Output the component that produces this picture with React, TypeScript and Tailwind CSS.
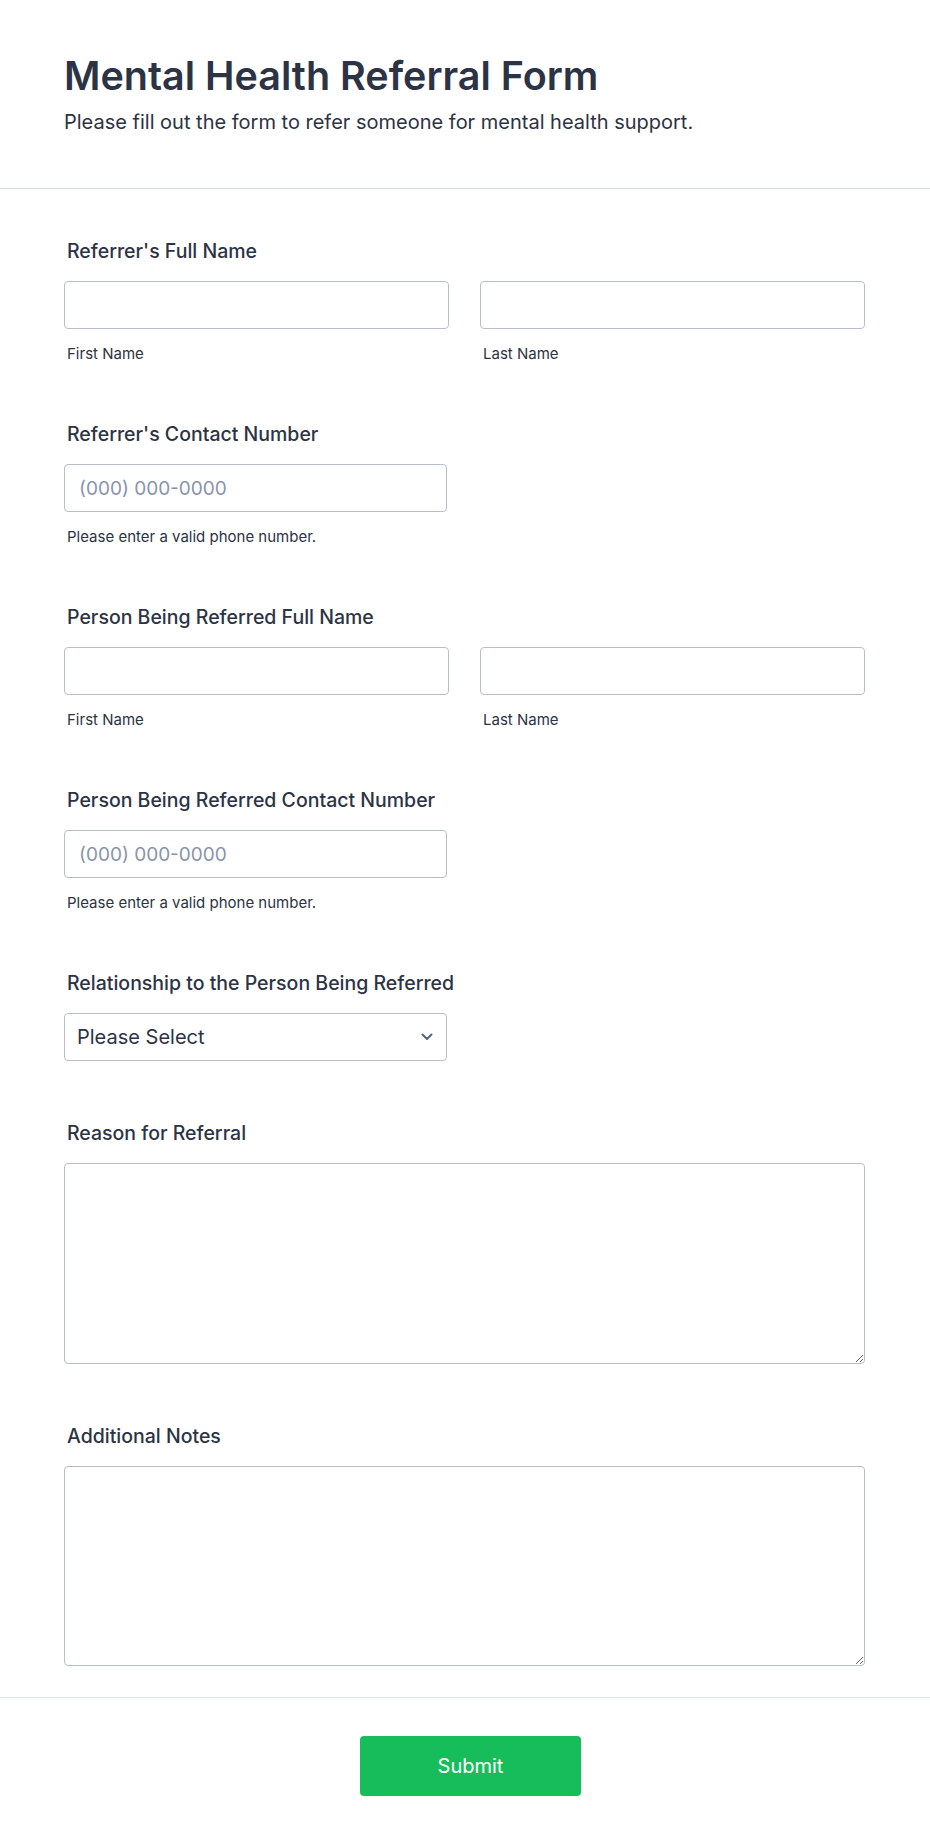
import type { ReactNode } from 'react'

function Label({ children }: { children: ReactNode }) {
  return (
    <div className="pl-[3px] text-[19.5px] leading-[24px] font-medium text-[#2c3345] mb-[18px]">
      {children}
    </div>
  )
}

function Sub({ children }: { children: ReactNode }) {
  return <div className="pl-[3px] mt-[16px] text-[15px] leading-[18px] text-[#2c3345]">{children}</div>
}

const inputCls =
  'block w-full h-[48px] rounded-[4px] border border-[#b8bdc9] bg-white px-[14px] text-[19px] text-[#2c3345] placeholder:text-[#8894ab] outline-none'

function NameField({ label, className = '' }: { label: string; className?: string }) {
  return (
    <div className={className}>
      <Label>{label}</Label>
      <div className="grid grid-cols-2 gap-[31px]">
        <div>
          <input className={inputCls} type="text" />
          <Sub>First Name</Sub>
        </div>
        <div>
          <input className={inputCls} type="text" />
          <Sub>Last Name</Sub>
        </div>
      </div>
    </div>
  )
}

function PhoneField({ label, className = '' }: { label: string; className?: string }) {
  return (
    <div className={className}>
      <Label>{label}</Label>
      <div className="w-[383px]">
        <input className={inputCls} type="tel" placeholder="(000) 000-0000" />
      </div>
      <Sub>Please enter a valid phone number.</Sub>
    </div>
  )
}

function TextAreaField({ label, h }: { label: string; h: string }) {
  return (
    <div className="mt-[60px]">
      <Label>{label}</Label>
      <textarea
        className={`block w-full ${h} rounded-[4px] border border-[#b8bdc9] bg-white p-[12px] text-[16px] text-[#2c3345] outline-none resize-y`}
      />
    </div>
  )
}

export default function App() {
  return (
    <div className="min-h-[1845px] bg-white font-['Inter',_'Noto_Sans',_sans-serif] text-[#2c3345]">
      <header className="px-16 pt-[52px] pb-[51px] border-b border-[#d3d6e4]">
        <h1 className="text-[39.5px] leading-[48px] font-semibold text-[#2c3345]">Mental Health Referral Form</h1>
        <p className="mt-[7px] text-[20px] leading-[30px] text-[#2c3345]">
          Please fill out the form to refer someone for mental health support.
        </p>
      </header>

      <form className="pl-16 pr-[65px] pt-[50px] pb-[31px] flex flex-col">
        <NameField label="Referrer's Full Name" />
        <PhoneField label="Referrer's Contact Number" className="mt-[59px]" />
        <NameField label="Person Being Referred Full Name" className="mt-[59px]" />
        <PhoneField label="Person Being Referred Contact Number" className="mt-[59px]" />

        <div className="mt-[59px]">
          <Label>Relationship to the Person Being Referred</Label>
          <div className="relative w-[383px]">
            <select className="block w-full h-[48px] appearance-none rounded-[4px] border border-[#b8bdc9] bg-white pl-[12px] pr-[36px] text-[20px] text-[#2c3345] outline-none">
              <option>Please Select</option>
              <option>Family Member</option>
              <option>Friend</option>
              <option>Colleague</option>
              <option>Healthcare Provider</option>
              <option>Other</option>
            </select>
            <svg
              className="pointer-events-none absolute right-[14px] top-1/2 -translate-y-1/2"
              width="12"
              height="8"
              viewBox="0 0 12 8"
              fill="none"
            >
              <path d="M1.5 1.5L6 6l4.5-4.5" stroke="#57647e" strokeWidth="2" strokeLinecap="round" strokeLinejoin="round" />
            </svg>
          </div>
        </div>

        <TextAreaField label="Reason for Referral" h="h-[201px]" />
        <TextAreaField label="Additional Notes" h="h-[200px]" />
      </form>

      <div className="border-t border-[#e3e8f0] pt-[38px] pb-[48px] flex justify-center pl-[11px]">
        <button
          type="button"
          className="w-[221px] h-[60px] rounded-[4px] bg-[#18bd5b] text-white text-[20px] font-normal"
        >
          Submit
        </button>
      </div>
    </div>
  )
}
